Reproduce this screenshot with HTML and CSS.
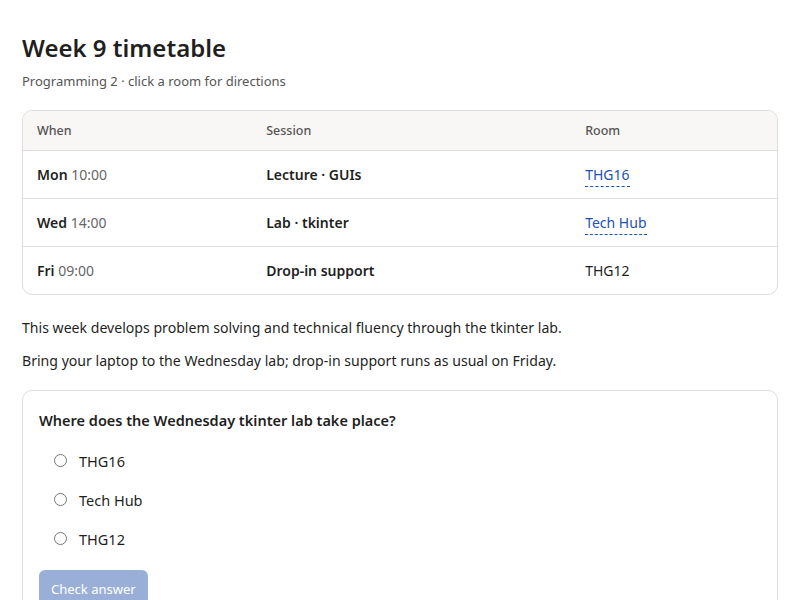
FILE: index.html
```html
<!DOCTYPE html>
<html>
<head>
    <title>Week 9 timetable</title>
    <link rel="stylesheet" href="styles.css">
</head>
<body>
    <main class="page">
        <h1 class="title">Week 9 timetable</h1>
        <p class="subtitle">Programming 2 · click a room for directions</p>

        <div class="card">
            <table class="timetable">
                <thead>
                    <tr>
                        <th class="col-when">When</th>
                        <th class="col-session">Session</th>
                        <th>Room</th>
                    </tr>
                </thead>
                <tbody>
                    <tr>
                        <td><b>Mon</b> <span class="time">10:00</span></td>
                        <td class="session">Lecture · GUIs</td>
                        <td><a class="room" href="#thg16">THG16</a></td>
                    </tr>
                    <tr>
                        <td><b>Wed</b> <span class="time">14:00</span></td>
                        <td class="session">Lab · tkinter</td>
                        <td><a class="room" href="#techhub">Tech Hub</a></td>
                    </tr>
                    <tr>
                        <td><b>Fri</b> <span class="time">09:00</span></td>
                        <td class="session">Drop-in support</td>
                        <td>THG12</td>
                    </tr>
                </tbody>
            </table>
        </div>

        <p class="note">This week develops problem solving and technical fluency through the tkinter lab.</p>
        <p class="note">Bring your laptop to the Wednesday lab; drop-in support runs as usual on Friday.</p>

        <form class="card quiz">
            <p class="question">Where does the Wednesday tkinter lab take place?</p>
            <label class="option"><input type="radio" name="room" value="THG16"> THG16</label>
            <label class="option"><input type="radio" name="room" value="Tech Hub"> Tech Hub</label>
            <label class="option"><input type="radio" name="room" value="THG12"> THG12</label>
            <button type="button" class="check" disabled>Check answer</button>
        </form>
    </main>
</body>
</html>
```

FILE: styles.css
```css
body {
    margin: 0;
    font-family: "Noto Sans", "Open Sans", sans-serif;
    color: #1f1f1f;
    background-color: #fff;
}

.page {
    padding: 28px 22px;
}

.title {
    font-size: 24px;
    font-weight: 600;
    margin: 0 0 4px;
    line-height: 40px;
}

.subtitle {
    font-size: 13px;
    color: #555;
    margin: 0 0 20px;
}

.card {
    border: 1px solid #dedede;
    border-radius: 10px;
    overflow: hidden;
}

.timetable {
    width: 100%;
    border-collapse: collapse;
    font-size: 14px;
}

.timetable th {
    background-color: #f8f7f5;
    color: #555;
    font-size: 12.5px;
    font-weight: 500;
    text-align: left;
    height: 39px;
    padding: 0 14px;
    border-bottom: 1px solid #dedede;
}

.col-when {
    width: 30.4%;
}

.col-session {
    width: 42.3%;
}

.timetable td {
    height: 47px;
    padding: 0 14px;
    border-bottom: 1px solid #dedede;
}

.timetable tbody tr:last-child td {
    border-bottom: none;
}

.timetable b,
.session {
    font-weight: 600;
}

.time {
    color: #666;
}

.room {
    color: #1c52b8;
    text-decoration: none;
    border-bottom: 1.5px dashed #1c52b8;
    padding-bottom: 2px;
}

.note {
    font-size: 14.1px;
    line-height: 22px;
    margin: 22px 0 0;
}

.note + .note {
    margin-top: 11px;
}

.quiz {
    margin-top: 18px;
    padding: 19px 16px 0;
    height: 220px;
}

.question {
    font-size: 14.5px;
    font-weight: 600;
    line-height: 20px;
    margin: 0 0 11px;
}

.option {
    display: flex;
    align-items: center;
    gap: 12px;
    font-size: 14.5px;
    height: 39px;
    padding-left: 15px;
}

.option input {
    margin: 0;
    width: 13px;
    height: 13px;
}

.check {
    margin-top: 12px;
    padding: 0 12px;
    height: 38px;
    border: none;
    border-radius: 6px;
    background-color: #9aafd8;
    color: #fff;
    font-family: inherit;
    font-size: 13px;
}
```
